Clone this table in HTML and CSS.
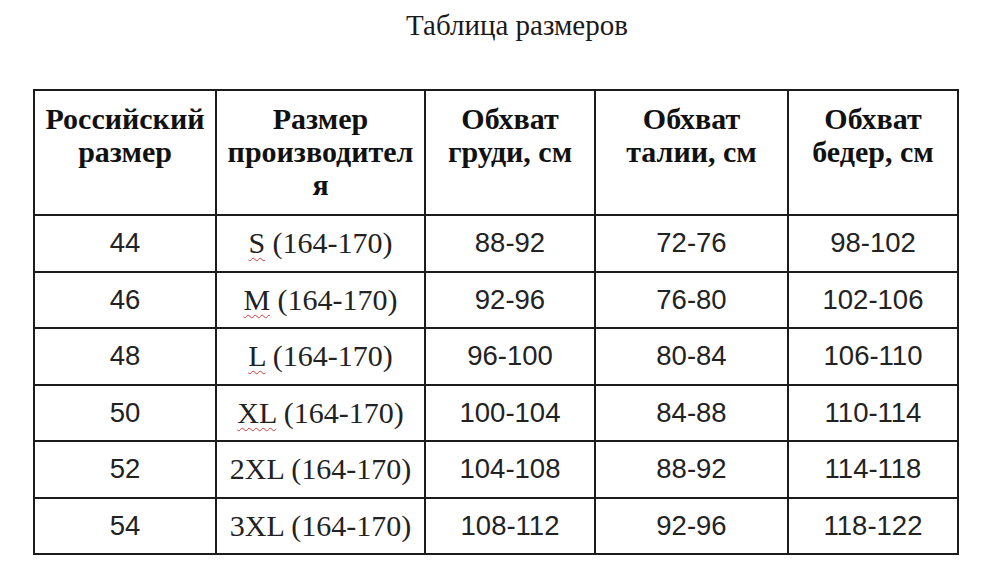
FILE: index.html
```html
<!DOCTYPE html>
<html lang="ru">
<head>
<meta charset="utf-8">
<link rel="stylesheet" href="styles.css">
</head>
<body>
<h1 class="title">Таблица размеров</h1>
<table class="sizes">
  <colgroup>
    <col class="c1"><col class="c2"><col class="c3"><col class="c4"><col class="c5">
  </colgroup>
  <thead>
    <tr class="head">
      <th>Российский<br>размер</th>
      <th>Размер<br>производител<br>я</th>
      <th>Обхват<br>груди, см</th>
      <th>Обхват<br>талии, см</th>
      <th>Обхват<br>бедер, см</th>
    </tr>
  </thead>
  <tbody>
    <tr><td>44</td><td class="serif"><span class="spell">S</span> (164-170)</td><td>88-92</td><td>72-76</td><td>98-102</td></tr>
    <tr><td>46</td><td class="serif"><span class="spell">M</span> (164-170)</td><td>92-96</td><td>76-80</td><td>102-106</td></tr>
    <tr><td>48</td><td class="serif"><span class="spell">L</span> (164-170)</td><td>96-100</td><td>80-84</td><td>106-110</td></tr>
    <tr><td>50</td><td class="serif"><span class="spell">XL</span> (164-170)</td><td>100-104</td><td>84-88</td><td>110-114</td></tr>
    <tr><td>52</td><td class="serif">2XL (164-170)</td><td>104-108</td><td>88-92</td><td>114-118</td></tr>
    <tr><td>54</td><td class="serif">3XL (164-170)</td><td>108-112</td><td>92-96</td><td>118-122</td></tr>
  </tbody>
</table>
</body>
</html>
```
FILE: styles.css
```css
html, body {
  margin: 0;
  padding: 0;
  background: #fff;
}
body {
  width: 1000px;
  height: 573px;
  overflow: hidden;
  color: #1a1a1a;
}
.title {
  margin: 0;
  padding: 8px 0 0 34px;
  height: 80px;
  box-sizing: border-box;
  text-align: center;
  font-family: "Liberation Serif", serif;
  font-weight: normal;
  font-size: 29px;
  line-height: 34px;
}
.sizes {
  margin: 9px 0 0 33px;
  border-collapse: collapse;
  table-layout: fixed;
  width: 924px;
}
.c1 { width: 182px; }
.c2 { width: 209px; }
.c3 { width: 170px; }
.c4 { width: 193px; }
.c5 { width: 170px; }
.sizes th, .sizes td {
  border: 2px solid #1c1c1c;
  text-align: center;
  padding: 0;
}
.head { height: 125px; }
.head th {
  vertical-align: top;
  padding: 11px 0 0;
  font-family: "Liberation Serif", serif;
  font-weight: bold;
  font-size: 30px;
  line-height: 33px;
  color: #111;
  white-space: nowrap;
}
.sizes tbody tr { height: 56.5px; }
.sizes td {
  font-family: "Liberation Sans", Arial, sans-serif;
  font-size: 27.5px;
  color: #222;
  vertical-align: middle;
}
.sizes td.serif {
  font-family: "Liberation Serif", serif;
  font-size: 30px;
}
.spell {
  text-decoration: underline wavy #d23a3a;
  text-decoration-thickness: 1px;
  text-underline-offset: 4px;
}
```
